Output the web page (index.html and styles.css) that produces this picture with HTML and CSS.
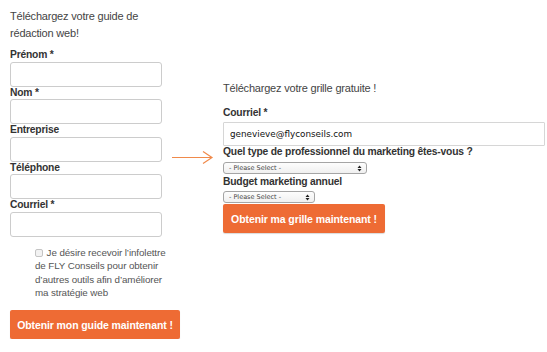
FILE: index.html
```html
<!DOCTYPE html>
<html lang="fr">
<head>
<meta charset="utf-8">
<title>Téléchargez</title>
<link rel="stylesheet" href="styles.css">
</head>
<body>
<div class="page">
  <form class="col-left">
    <h2 class="heading">Téléchargez votre guide de rédaction web!</h2>
    <label class="lbl">Prénom *</label>
    <input class="field" type="text">
    <label class="lbl">Nom *</label>
    <input class="field" type="text">
    <label class="lbl">Entreprise</label>
    <input class="field" type="text">
    <label class="lbl">Téléphone</label>
    <input class="field" type="text">
    <label class="lbl">Courriel *</label>
    <input class="field" type="text">
    <p class="optin"><input class="check" type="checkbox"> Je désire recevoir l’infolettre de FLY Conseils pour obtenir d’autres outils afin d’améliorer ma stratégie web</p>
    <button class="btn btn-left" type="button">Obtenir mon guide maintenant !</button>
  </form>
  <form class="col-right">
    <svg class="arrow" width="44" height="16" viewBox="0 0 44 16">
      <path d="M0 7.5 H40" stroke="#f08a4b" stroke-width="1.2" fill="none"/>
      <path d="M31 1.5 L40 7.5 L31 13.5" stroke="#f08a4b" stroke-width="1.2" fill="none"/>
    </svg>
    <h2 class="heading-r">Téléchargez votre grille gratuite !</h2>
    <label class="lbl-r">Courriel *</label>
    <input class="field-r" type="text" value="genevieve@flyconseils.com">
    <label class="lbl-r lbl-q">Quel type de professionnel du marketing êtes-vous ?</label>
    <span class="sel sel-wide">
      <select><option>- Please Select -</option></select>
      <svg class="sel-arrows" width="5" height="7" viewBox="0 0 5 7"><path d="M0.5 3 L2.5 0.5 L4.5 3 Z M0.5 4 L2.5 6.5 L4.5 4 Z" fill="#222"/></svg>
    </span>
    <label class="lbl-r lbl-b">Budget marketing annuel</label>
    <span class="sel sel-narrow">
      <select><option>- Please Select -</option></select>
      <svg class="sel-arrows" width="5" height="7" viewBox="0 0 5 7"><path d="M0.5 3 L2.5 0.5 L4.5 3 Z M0.5 4 L2.5 6.5 L4.5 4 Z" fill="#222"/></svg>
    </span>
    <button class="btn btn-right" type="button">Obtenir ma grille maintenant !</button>
  </form>
</div>
</body>
</html>
```
FILE: styles.css
```css
* { box-sizing: border-box; }
html, body { margin: 0; padding: 0; background: #fff; }
body { font-family: "Liberation Sans", Arial, sans-serif; color: #333; }

.page {
  display: flex;
  align-items: flex-start;
  padding-left: 10px;
}

.col-left {
  width: 170px;
  display: flex;
  flex-direction: column;
  align-items: flex-start;
  padding-top: 8px;
}

.heading {
  margin: 0 0 7px 0;
  font-size: 11px;
  letter-spacing: -0.2px;
  line-height: 17px;
  font-weight: normal;
  color: #444;
  width: 150px;
}

.lbl {
  font-size: 10.3px;
  letter-spacing: -0.2px;
  font-weight: bold;
  line-height: 12.5px;
  color: #333;
}

.field {
  width: 152px;
  height: 25px;
  margin: 0;
  border: 1px solid #ccc;
  border-radius: 3px;
  background: #fff;
}

.optin {
  margin: 9.5px 0 0 25px;
  width: 134px;
  font-size: 9.8px;
  letter-spacing: -0.1px;
  line-height: 13.3px;
  color: #555;
}

.check {
  -webkit-appearance: none;
  appearance: none;
  width: 8px;
  height: 8px;
  margin: 0 1px 0 0;
  border: 1px solid #c4c4c4;
  border-radius: 2px;
  background: #f2f2f2;
  vertical-align: -1px;
}

.btn {
  border: none;
  border-radius: 2px;
  background: #ee6b34;
  color: #fff;
  font-family: "Liberation Sans", Arial, sans-serif;
  font-weight: bold;
  font-size: 10.5px;
  letter-spacing: -0.1px;
  height: 29px;
  padding: 0;
  box-shadow: 0 1px 1px rgba(0,0,0,0.15);
}

.btn-left {
  margin-top: 11px;
  width: 170px;
}

.col-right {
  position: relative;
  margin-left: 43px;
  width: 322px;
  margin-top: 80px;
  display: flex;
  flex-direction: column;
  align-items: flex-start;
}

.arrow {
  position: absolute;
  left: -51px;
  top: 70px;
}

.heading-r {
  margin: 0;
  font-size: 11px;
  letter-spacing: -0.2px;
  line-height: 16px;
  font-weight: normal;
  color: #444;
}

.lbl-r {
  font-size: 10.3px;
  letter-spacing: -0.2px;
  font-weight: bold;
  line-height: 12px;
  color: #333;
}

.heading-r + .lbl-r { margin-top: 11px; }

.field-r {
  margin-top: 3px;
  width: 322px;
  height: 24px;
  border: 1px solid #d6d6d6;
  border-radius: 1px;
  padding: 0 6px;
  font-family: "DejaVu Sans", sans-serif;
  font-size: 8.8px;
  color: #111;
  background: #fff;
}

.lbl-q { margin-top: 0; }

.sel {
  position: relative;
  display: block;
  height: 12px;
}

.sel-wide { width: 144px; margin-top: 4px; }
.sel-narrow { width: 92px; margin-top: 3px; }

.sel select {
  -webkit-appearance: none;
  appearance: none;
  display: block;
  width: 100%;
  height: 12px;
  margin: 0;
  padding: 0 0 0 5px;
  border: 1px solid #a5a5a5;
  border-radius: 3px;
  background: linear-gradient(#fdfdfd, #f0f0f0);
  font-family: "DejaVu Sans", sans-serif;
  font-size: 6.5px;
  line-height: 10px;
  color: #444;
}

.sel-arrows {
  position: absolute;
  right: 5px;
  top: 2.5px;
}

.lbl-b { margin-top: 2px; }

.btn-right {
  margin-top: 1px;
  width: 162px;
}
```
